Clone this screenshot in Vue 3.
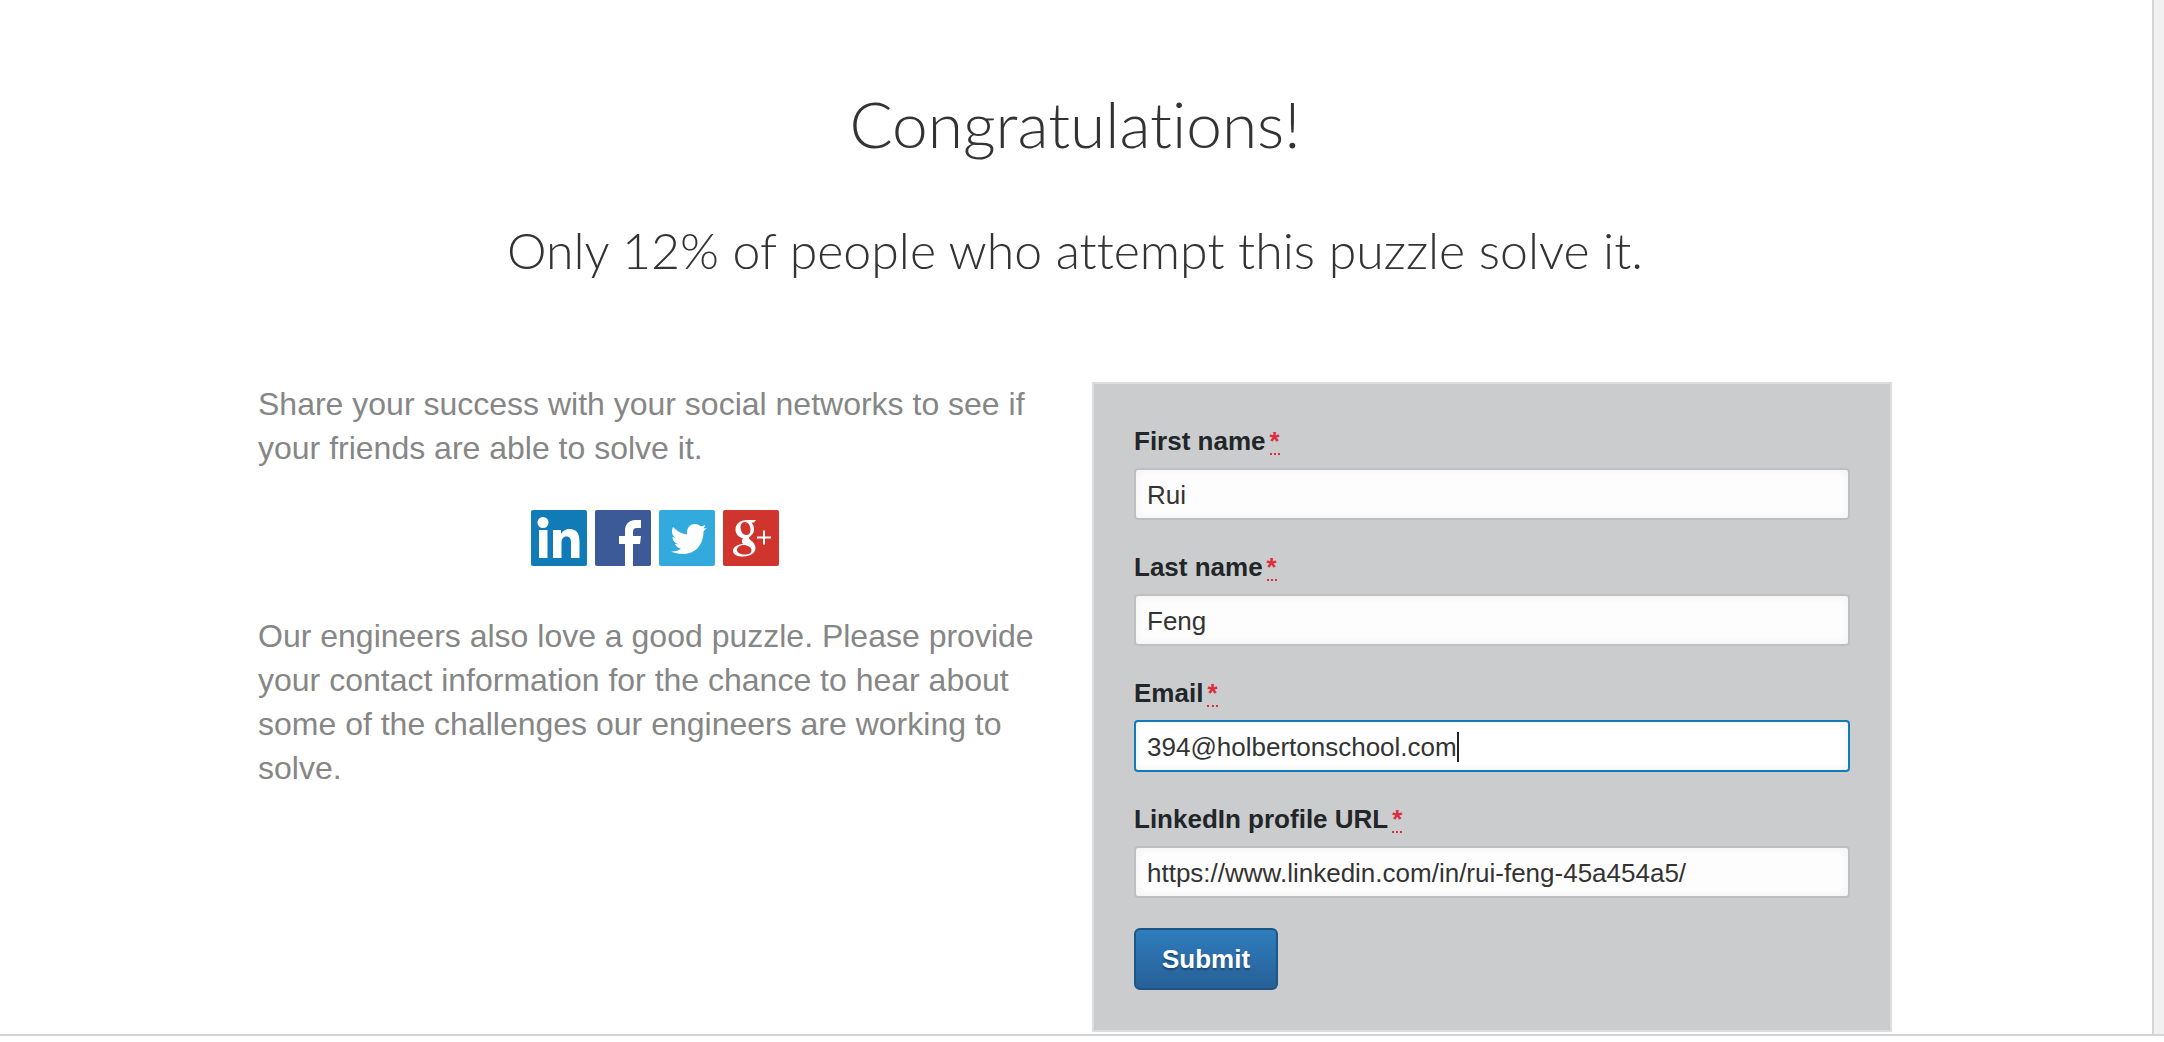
<script setup>
import { reactive } from 'vue'

const fields = reactive([
  { id: 'first-name', label: 'First name', type: 'text', value: 'Rui' },
  { id: 'last-name', label: 'Last name', type: 'text', value: 'Feng' },
  { id: 'email', label: 'Email', type: 'text', value: '394@holbertonschool.com', active: true },
  { id: 'profile-url', label: 'LinkedIn profile URL', type: 'url', value: 'https://www.linkedin.com/in/rui-feng-45a454a5/' },
])
</script>

<template>
  <div class="window">
    <main class="page">
      <header class="intro">
        <h1>Congratulations!</h1>
        <h2>Only 12% of people who attempt this puzzle solve it.</h2>
      </header>
      <div class="columns">
        <section class="story">
          <p>Share your success with your social networks to see if your friends are able to solve it.</p>
          <nav class="share">
            <a href="#" aria-label="Share on LinkedIn">
              <svg viewBox="0 0 56 56">
                <rect width="56" height="56" rx="2" fill="#117bb8" />
                <circle cx="12" cy="12.500" r="5.500" fill="#fff" />
                <path d="M8 20h8.500v28H8zM22 20h8v4c2-3.300 5-5 8.500-5C46 19 48.500 24 48.500 32v16H40V33c0-4-1-6.500-4.500-6.500S30.500 29 30.500 33v15H22z" fill="#fff" />
              </svg>
            </a>
            <a href="#" aria-label="Share on Facebook">
              <svg viewBox="0 0 56 56">
                <rect width="56" height="56" rx="2" fill="#3d5a98" />
                <path d="M30 56V34h-6v-8h6v-5c0-7 4-11 10.500-11H46v8h-4c-3 0-4 1.500-4 4v4h8l-1 8h-7v22z" fill="#fff" />
              </svg>
            </a>
            <a href="#" aria-label="Share on Twitter">
              <svg viewBox="0 0 56 56">
                <rect width="56" height="56" rx="2" fill="#33aade" />
                <path d="M14 17c5 5 10 7 14 7.500-.500-6 2.500-10.500 8-10.500 2.500 0 4.500 1 6 2.500L46.500 15l-2 3.500 3-.5-3 3.500C44.500 34 37 44 24 44c-5 0-9-1-12-2.500 4 .3 8-1 10-3-3-.5-5-2-6-4.500h3c-3.500-1-5.500-4-5.500-7l3 .7C13 25.500 12 21 14 17z" fill="#fff" />
              </svg>
            </a>
            <a href="#" aria-label="Share on Google Plus">
              <svg viewBox="0 0 56 56">
                <rect width="56" height="56" rx="2" fill="#cf342d" />
                <path d="M33 10h-9c-7 0-11.500 4-11.500 9.500 0 4.500 3 8 7.500 8.500-1.500 2-1.500 4 0 6-6 .5-10 3-10 7 0 3.500 4 5.500 10 5.500 8 0 12.500-4 12.500-8.500 0-3.500-2-5.500-5-8-2-1.500-2-2.500 0-4 2.500-2 3.500-4 3.500-7 0-2.500-.8-4.500-2.500-6.500h2.500zM22 12c3.500 0 5.500 4 5.500 8 0 3-1.500 5-4.500 5-3.500 0-5.500-4.500-5.500-8 0-3 1.500-5 4.500-5zM21.500 35c4 .5 7 2.500 7 5.500 0 2.500-2.500 4-6.500 4-5 0-8-2-8-4.500 0-3 3-5 7.500-5z" fill="#fff" fill-rule="evenodd" />
                <path d="M34 27.500h14M41 20.500v14" fill="none" stroke="#fff" stroke-width="2" />
              </svg>
            </a>
          </nav>
          <p>Our engineers also love a good puzzle. Please provide your contact information for the chance to hear about some of the challenges our engineers are working to solve.</p>
        </section>
        <form class="contact" @submit.prevent>
          <div v-for="field in fields" :key="field.id" class="field">
            <label :for="field.id">{{ field.label }}<abbr title="required">*</abbr></label>
            <div class="control" :class="{ active: field.active }">
              <input :id="field.id" v-model="field.value" :type="field.type" />
              <span v-if="field.active" class="caret-line" aria-hidden="true"><span class="typed">{{ field.value }}</span><i class="caret"></i></span>
            </div>
          </div>
          <button type="submit">Submit</button>
        </form>
      </div>
    </main>
    <div class="gutter"></div>
  </div>
</template>

<style>
body {
  background: #fff;
}
</style>

<style scoped>
* {
  box-sizing: border-box;
}
.window {
  display: flex;
  border-bottom: 2px solid #d5d5d5;
  font-family: "Liberation Sans", Helvetica, Arial, sans-serif;
}
.page {
  flex: 1;
  min-width: 0;
  padding: 84px 42px 2px 40px;
}
.gutter {
  flex: none;
  width: 12px;
  border-left: 2px solid #d5d5d5;
  background: #f1f1f1;
}
.intro {
  color: #333;
  font-family: Lato, sans-serif;
  font-variant-ligatures: none;
  text-align: center;
}
h1,
h2 {
  margin: 0;
  font-weight: 300;
}
h1 {
  font-size: 64px;
  line-height: 80px;
}
h2 {
  margin-top: 54px;
  font-size: 50px;
  line-height: 64px;
}
.columns {
  display: grid;
  grid-template-columns: minmax(0, 794fr) minmax(0, 800fr);
  gap: 40px;
  max-width: 1634px;
  margin: 100px auto 0;
}
p {
  margin: 0;
  color: #868686;
  font-size: 32px;
  line-height: 44px;
}
.share {
  display: flex;
  justify-content: center;
  gap: 8px;
  margin: 40px 0 48px;
}
.share a,
.share svg {
  display: block;
  width: 56px;
  height: 56px;
}
.contact {
  padding: 40px;
  border: 2px solid #dcdddd;
  background: #cbccce;
}
.field {
  margin-bottom: 30px;
}
label {
  display: block;
  margin-bottom: 10px;
  color: #222629;
  font-size: 26px;
  font-weight: 700;
  line-height: 34px;
}
abbr {
  display: inline-block;
  height: 28px;
  margin-left: 4px;
  border-bottom: 2px dotted #dd2e3e;
  color: #dd2e3e;
  line-height: 28px;
  text-decoration: none;
}
.control {
  position: relative;
}
input {
  display: block;
  width: 100%;
  height: 52px;
  padding: 2px 11px 0;
  border: 2px solid #bfbfbf;
  border-radius: 4px;
  outline: none;
  background: #fdfdfd;
  box-shadow: inset 0 0 8px #eee;
  color: #333;
  font: 26px/36px "Liberation Sans", Helvetica, Arial, sans-serif;
}
.active input {
  border-color: #117bb8;
  background: #fff;
}
.caret-line {
  position: absolute;
  inset: 2px 13px 0;
  display: flex;
  align-items: center;
  overflow: hidden;
  font-size: 26px;
  pointer-events: none;
}
.typed {
  visibility: hidden;
}
.caret {
  width: 2px;
  height: 30px;
  background: #222;
}
button {
  display: block;
  height: 62px;
  padding: 0 26px;
  border: 2px solid #1d5585;
  border-radius: 6px;
  background: linear-gradient(#2e7dbc, #286098);
  color: #fff;
  font: 700 26px/36px "Liberation Sans", Helvetica, Arial, sans-serif;
  text-shadow: 0 2px 2px rgba(0, 0, 0, 0.35);
}
</style>
